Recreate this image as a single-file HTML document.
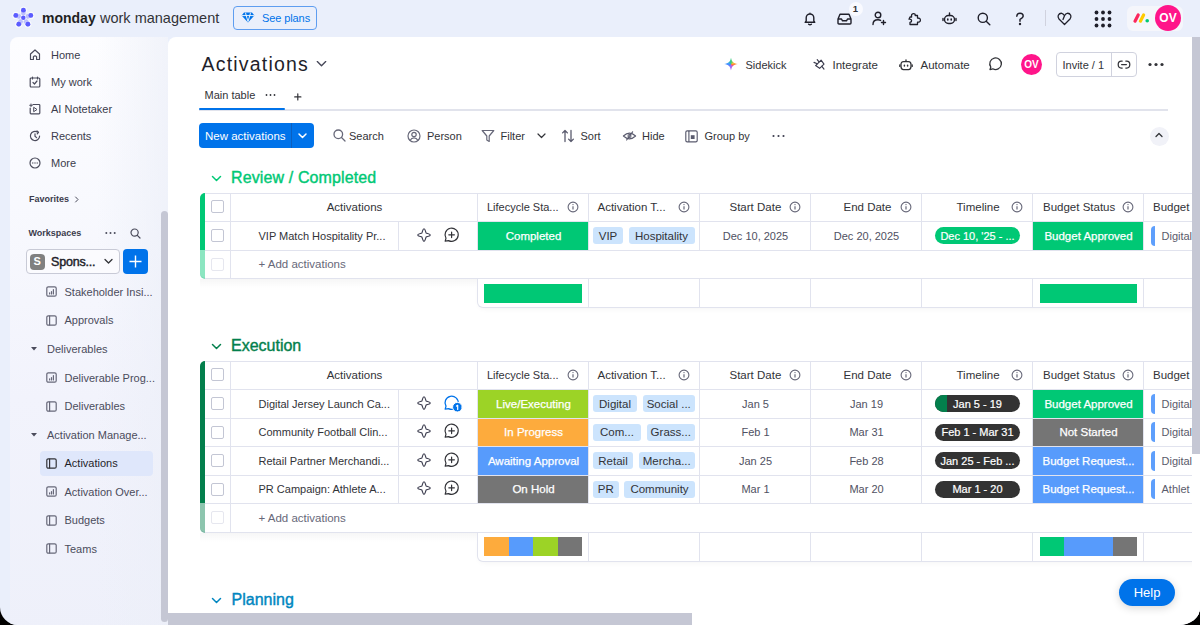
<!DOCTYPE html>
<html><head><meta charset="utf-8">
<style>
*{box-sizing:border-box;margin:0;padding:0}
html,body{width:1200px;height:625px;overflow:hidden;background:#000}
body{font-family:"Liberation Sans",sans-serif;color:#323338;position:relative}
#app{position:absolute;left:0;top:0;width:1200px;height:625px;background:#eaeffb;border-radius:0 0 21px 18px / 0 0 17px 18px;overflow:hidden}
.a{position:absolute}
.t{position:absolute;white-space:nowrap;line-height:16px}
svg{position:absolute;overflow:visible}
.ic{fill:none;stroke-width:1.4;stroke-linecap:round;stroke-linejoin:round}
#side{position:absolute;left:10px;top:37px;width:158px;height:600px;border-radius:8px 0 0 0;background:linear-gradient(90deg,rgba(236,239,248,0) 55%,rgba(236,239,248,.7) 100%),linear-gradient(180deg,#fdfdff 0%,#f8f9fe 28%,#f2f3fc 60%,#eef0fa 100%)}
.sb .t{font-size:11px;color:#323338}
.sic{fill:none;stroke-width:1.2;stroke-linecap:round;stroke-linejoin:round}
#main{position:absolute;left:168px;top:37px;width:1032px;height:600px;background:#fff;border-radius:8px 0 0 0}
</style></head><body>
<div id="app">
<!-- TOP BAR -->
<svg style="left:0;top:0" width="40" height="37"><g fill="#fff" opacity=".7"><circle cx="23.4" cy="10.2" r="3.6"/><circle cx="15.8" cy="15.4" r="3.6"/><circle cx="30.8" cy="15.4" r="3.6"/><circle cx="18.75" cy="24.2" r="3.6"/><circle cx="27.9" cy="24.2" r="3.6"/><circle cx="23.3" cy="17.7" r="3.3"/></g><line x1="23.40" y1="10.20" x2="23.36" y2="13.05" stroke="#6161ff" stroke-width="4.6" stroke-linecap="round" opacity=".35"/><line x1="15.80" y1="15.40" x2="18.65" y2="16.27" stroke="#6161ff" stroke-width="4.6" stroke-linecap="round" opacity=".35"/><line x1="30.80" y1="15.40" x2="27.95" y2="16.27" stroke="#6161ff" stroke-width="4.6" stroke-linecap="round" opacity=".35"/><line x1="18.75" y1="24.20" x2="20.48" y2="21.73" stroke="#6161ff" stroke-width="4.6" stroke-linecap="round" opacity=".35"/><line x1="27.90" y1="24.20" x2="26.15" y2="21.73" stroke="#6161ff" stroke-width="4.6" stroke-linecap="round" opacity=".35"/><g fill="#5b5bff"><circle cx="23.4" cy="10.2" r="2.4"/><circle cx="15.8" cy="15.4" r="2.4"/><circle cx="30.8" cy="15.4" r="2.4"/><circle cx="18.75" cy="24.2" r="2.4"/><circle cx="27.9" cy="24.2" r="2.4"/><circle cx="23.3" cy="17.7" r="2.2"/></g></svg>
<div class="t" style="left:42px;top:10px;font-size:14px;font-weight:bold;color:#1f1f1f;line-height:16px">monday</div>
<div class="t" style="left:100px;top:10px;font-size:14.5px;color:#323338;line-height:16px">work management</div>
<div class="a" style="left:233px;top:6px;width:84px;height:24px;border:1px solid #5e9df0;border-radius:4px"></div>
<svg style="left:241px;top:12px" width="14" height="11" viewBox="0 0 14 11">
  <path d="M3 0.6 H11 L13.4 3.6 L7 10.4 L0.6 3.6 Z" fill="#0073ea"/>
  <path d="M0.8 3.6 H13.2 M4.5 0.8 L5.2 3.6 L7 9.5 L8.8 3.6 L9.5 0.8" fill="none" stroke="#fff" stroke-width=".9"/>
</svg>
<div class="t" style="left:262px;top:10px;font-size:11px;letter-spacing:-0.1px;color:#0073ea">See plans</div>


<!-- TOPBAR ICONS -->
<svg style="left:803px;top:12px" width="14" height="14" viewBox="0 0 14 14" class="ic" stroke="#1f1f2a"><path d="M2.2 10.3 H11.8 L10.8 8.8 V5.8 A3.8 3.8 0 0 0 3.2 5.8 V8.8 Z M5.6 12.2 Q7 13.3 8.4 12.2 M7 1.2 V2"/></svg>
<svg style="left:837px;top:12px" width="15" height="14" viewBox="0 0 15 14" class="ic" stroke="#1f1f2a"><path d="M1 7 L3 2.3 H12 L14 7 V11 Q14 12 13 12 H2 Q1 12 1 11 Z M1 7 H4.5 L5.5 8.8 H9.5 L10.5 7 H14"/></svg>
<div class="a" style="left:848.5px;top:2px;width:14px;height:14px;border-radius:7px;background:#f9faff"></div>
<div class="t" style="left:848.5px;top:1px;width:14px;text-align:center;font-size:9.5px;font-weight:bold;color:#323338">1</div>
<svg style="left:872px;top:11px" width="15" height="15" viewBox="0 0 15 15" class="ic" stroke="#1f1f2a"><circle cx="6" cy="4" r="2.8"/><path d="M1 13.5 Q1 8.8 6 8.8 Q7.6 8.8 8.6 9.4 M11.5 9.5 V13.5 M9.5 11.5 H13.5"/></svg>
<svg style="left:907px;top:11px" width="15" height="15" viewBox="0 0 15 15" class="ic" stroke="#1f1f2a"><path d="M3 6 H4.6 Q4 3 6.3 2.6 Q8.4 2.5 8.2 4.5 H10.5 V7 Q13.5 7 13.4 9.2 Q13.3 11.4 10.5 11.2 V13.5 H3 V11.3 Q4.8 11 4.6 9.5 Q4.4 8 2 8.2 Z" stroke-width="1.3"/></svg>
<svg style="left:942px;top:12px" width="15" height="13" viewBox="0 0 15 13" class="ic" stroke="#1f1f2a"><rect x="2.5" y="3.5" width="10" height="8" rx="4"/><path d="M7.5 1 V3.5 M1 6.5 V8.5 M14 6.5 V8.5" /><path d="M5.8 7 V8 M9.2 7 V8" stroke-width="1.6"/></svg>
<svg style="left:977px;top:12px" width="14" height="14" viewBox="0 0 14 14" class="ic" stroke="#1f1f2a"><circle cx="5.8" cy="5.8" r="4.6"/><path d="M9.2 9.2 L12.8 12.8"/></svg>
<svg style="left:1014px;top:12px" width="12" height="14" viewBox="0 0 12 14" class="ic" stroke="#1f1f2a"><path d="M2.8 4.2 Q2.8 1.2 6 1.2 Q9.2 1.2 9.2 4 Q9.2 5.8 6 7.3 V9.2"/><circle cx="6" cy="12" r=".5" fill="#1f1f2a"/></svg>
<div class="a" style="left:1045px;top:10px;width:1px;height:16px;background:#d0d2de"></div>
<svg style="left:1057px;top:12px" width="15" height="14" viewBox="0 0 15 14" class="ic" stroke="#1f1f2a"><path d="M7.5 12.5 L2 7 Q0.5 5.2 1.3 3.2 Q2.5 1 4.8 1.3 Q6.5 1.6 7.5 3.8 L6 7.5 M7.5 12.5 L13 7 Q14.5 5.2 13.7 3.2 Q12.5 1 10.2 1.3 Q8.7 1.5 7.5 3.8" stroke-width="1.3"/></svg>
<svg style="left:1094px;top:10px" width="18" height="18" viewBox="0 0 18 18" fill="#1f1f2a"><circle cx="2.5" cy="2.5" r="1.9"/><circle cx="9" cy="2.5" r="1.9"/><circle cx="15.5" cy="2.5" r="1.9"/><circle cx="2.5" cy="9" r="1.9"/><circle cx="9" cy="9" r="1.9"/><circle cx="15.5" cy="9" r="1.9"/><circle cx="2.5" cy="15.5" r="1.9"/><circle cx="9" cy="15.5" r="1.9"/><circle cx="15.5" cy="15.5" r="1.9"/></svg>
<div class="a" style="left:1127px;top:6px;width:56px;height:25px;border-radius:6px;background:#f5f6fb"></div>
<svg style="left:1133px;top:13px" width="17" height="10" viewBox="0 0 17 10"><path d="M2 8.2 L5.2 2" stroke="#fb275d" stroke-width="3.2" stroke-linecap="round"/><path d="M7.4 8.2 L10.6 2" stroke="#ffcb00" stroke-width="3.2" stroke-linecap="round"/><circle cx="14.2" cy="7.8" r="1.8" fill="#00ca72"/></svg>
<div class="a" style="left:1155px;top:5px;width:26px;height:26px;border-radius:13px;background:#ff158a;color:#fff;font-weight:bold;font-size:12px;line-height:26px;text-align:center">OV</div>

<!-- SIDEBAR -->
<div id="side"></div>
<div class="sb">
<svg style="left:29px;top:49px" width="12" height="12" viewBox="0 0 12 12" class="sic" stroke="#4b4c5c"><path d="M1.5 10.5 V5 L6 1 L10.5 5 V10.5 H7.6 V7.6 Q6 6.3 4.4 7.6 V10.5 Z" stroke="#4b4c5c"/></svg>
<div class="t" style="left:51px;top:47px;color:#3b3c4c">Home</div>
<svg style="left:29px;top:76px" width="12" height="12" viewBox="0 0 12 12" class="sic"><rect x="1.2" y="2" width="9.6" height="9" rx="1" stroke="#4b4c5c"/><path d="M3.5 1 V3 M8.5 1 V3 M4 6.5 L5.5 8 L8 5" stroke="#4b4c5c"/></svg>
<div class="t" style="left:51px;top:74px;color:#3b3c4c">My work</div>
<svg style="left:29px;top:103px" width="12" height="12" viewBox="0 0 12 12" class="sic"><path d="M4 1.5 H10 Q10.8 1.5 10.8 2.3 V10 Q10.8 10.8 10 10.8 H2 Q1.2 10.8 1.2 10 V5" stroke="#4b4c5c"/><path d="M5 4.5 L8 6.5 L5 8.5 Z M2 1 V3.6 M0.7 2.3 H3.3" stroke="#4b4c5c" stroke-width="1"/></svg>
<div class="t" style="left:51px;top:101px;color:#3b3c4c">AI Notetaker</div>
<svg style="left:29px;top:130px" width="12" height="12" viewBox="0 0 12 12" class="sic"><path d="M10.6 6 A4.6 4.6 0 1 1 8.5 2.1" stroke="#4b4c5c"/><path d="M8 1 L9.5 2.3 L8.2 3.8 M6 3.8 V6.2 L7.6 7.6" stroke="#4b4c5c"/></svg>
<div class="t" style="left:51px;top:128px;color:#3b3c4c">Recents</div>
<svg style="left:29px;top:157px" width="12" height="12" viewBox="0 0 12 12" class="sic"><circle cx="6" cy="6" r="5" stroke="#4b4c5c"/><circle cx="3.8" cy="6" r=".65" fill="#4b4c5c" stroke="none"/><circle cx="6" cy="6" r=".65" fill="#4b4c5c" stroke="none"/><circle cx="8.2" cy="6" r=".65" fill="#4b4c5c" stroke="none"/></svg>
<div class="t" style="left:51px;top:155px;color:#3b3c4c">More</div>

<div class="t" style="left:29px;top:191px;font-size:9px;font-weight:bold;color:#3b3c4c">Favorites</div>
<svg style="left:73.5px;top:196px" width="6" height="7" viewBox="0 0 6 7" class="sic"><path d="M1.6 1 L4 3.5 L1.6 6" stroke="#4b4c5c" stroke-width="1"/></svg>
<div class="t" style="left:28.5px;top:225px;font-size:9px;font-weight:bold;color:#3b3c4c">Workspaces</div>
<svg style="left:105px;top:231px" width="11" height="4" viewBox="0 0 11 4"><circle cx="1.3" cy="2" r="1" fill="#4b4c5c"/><circle cx="5.5" cy="2" r="1" fill="#4b4c5c"/><circle cx="9.7" cy="2" r="1" fill="#4b4c5c"/></svg>
<svg style="left:130px;top:228px" width="11" height="11" viewBox="0 0 11 11" class="sic"><circle cx="4.6" cy="4.6" r="3.6" stroke="#4b4c5c"/><path d="M7.3 7.3 L10 10" stroke="#4b4c5c"/></svg>
<div class="a" style="left:25.5px;top:249px;width:94px;height:25px;border:1px solid #c8cad6;border-radius:4px;background:#fbfbfe"></div>
<div class="a" style="left:29.5px;top:254px;width:15.5px;height:15.5px;border-radius:4px;background:#808080;color:#fff;font-size:11px;font-weight:bold;line-height:15.5px;text-align:center">S</div>
<div class="t" style="left:51px;top:253.5px;font-size:12.5px;letter-spacing:-0.2px;-webkit-text-stroke:0.45px #1f1f2a;color:#1f1f2a">Spons...</div>
<svg style="left:104px;top:258px" width="9" height="7" viewBox="0 0 9 7" class="sic"><path d="M1 1.5 L4.5 5 L8 1.5" stroke="#323338" stroke-width="1.3"/></svg>
<div class="a" style="left:123px;top:249px;width:25px;height:25px;border-radius:4px;background:#0073ea"></div>
<svg style="left:129px;top:255px" width="13" height="13" viewBox="0 0 13 13"><path d="M6.5 0.5 V12.5 M0.5 6.5 H12.5" stroke="#fff" stroke-width="1.4"/></svg>

<svg style="left:46px;top:286px" width="11" height="11" viewBox="0 0 11 11" class="sic"><rect x="0.8" y="0.8" width="9.4" height="9.4" rx="1.5" stroke="#676879"/><path d="M3.6 8 V6.8 M5.5 8 V5.5 M7.4 8 V3.5" stroke="#676879"/></svg>
<div class="t" style="left:64.5px;top:284px;color:#4b4c5c">Stakeholder Insi...</div>
<svg style="left:46px;top:315px" width="11" height="11" viewBox="0 0 11 11" class="sic"><rect x="0.8" y="0.8" width="9.4" height="9.4" rx="1.5" stroke="#676879"/><path d="M3.6 1 V10" stroke="#676879"/></svg>
<div class="t" style="left:64.5px;top:312px;color:#4b4c5c">Approvals</div>
<svg style="left:30px;top:346px" width="8" height="6" viewBox="0 0 8 6"><path d="M1 1 H7 L4 4.6 Z" fill="#4b4c5c"/></svg>
<div class="t" style="left:47px;top:341px;color:#4b4c5c">Deliverables</div>
<svg style="left:46px;top:372px" width="11" height="11" viewBox="0 0 11 11" class="sic"><rect x="0.8" y="0.8" width="9.4" height="9.4" rx="1.5" stroke="#676879"/><path d="M3.6 8 V6.8 M5.5 8 V5.5 M7.4 8 V3.5" stroke="#676879"/></svg>
<div class="t" style="left:64.5px;top:370px;color:#4b4c5c">Deliverable Prog...</div>
<svg style="left:46px;top:401px" width="11" height="11" viewBox="0 0 11 11" class="sic"><rect x="0.8" y="0.8" width="9.4" height="9.4" rx="1.5" stroke="#676879"/><path d="M3.6 1 V10" stroke="#676879"/></svg>
<div class="t" style="left:64.5px;top:398px;color:#4b4c5c">Deliverables</div>
<svg style="left:30px;top:432px" width="8" height="6" viewBox="0 0 8 6"><path d="M1 1 H7 L4 4.6 Z" fill="#4b4c5c"/></svg>
<div class="t" style="left:47px;top:427px;color:#4b4c5c">Activation Manage...</div>
<div class="a" style="left:40px;top:450.5px;width:113px;height:25px;border-radius:4px;background:#dfe7fb"></div>
<svg style="left:46px;top:458px" width="11" height="11" viewBox="0 0 11 11" class="sic"><rect x="0.8" y="0.8" width="9.4" height="9.4" rx="1.5" stroke="#323338"/><path d="M3.6 1 V10" stroke="#323338"/></svg>
<div class="t" style="left:64.5px;top:455px;color:#1f1f2a">Activations</div>
<svg style="left:46px;top:486px" width="11" height="11" viewBox="0 0 11 11" class="sic"><rect x="0.8" y="0.8" width="9.4" height="9.4" rx="1.5" stroke="#676879"/><path d="M3.6 8 V6.8 M5.5 8 V5.5 M7.4 8 V3.5" stroke="#676879"/></svg>
<div class="t" style="left:64.5px;top:484px;color:#4b4c5c">Activation Over...</div>
<svg style="left:46px;top:515px" width="11" height="11" viewBox="0 0 11 11" class="sic"><rect x="0.8" y="0.8" width="9.4" height="9.4" rx="1.5" stroke="#676879"/><path d="M3.6 1 V10" stroke="#676879"/></svg>
<div class="t" style="left:64.5px;top:512px;color:#4b4c5c">Budgets</div>
<svg style="left:46px;top:543px" width="11" height="11" viewBox="0 0 11 11" class="sic"><rect x="0.8" y="0.8" width="9.4" height="9.4" rx="1.5" stroke="#676879"/><path d="M3.6 1 V10" stroke="#676879"/></svg>
<div class="t" style="left:64.5px;top:541px;color:#4b4c5c">Teams</div>
<div class="a" style="left:161px;top:210.5px;width:7px;height:411px;border-radius:3.5px;background:#c5c7d4"></div>
</div>

<!-- MAIN -->
<div id="main"></div>

<!-- MAIN HEADER -->
<div class="t" style="left:201.5px;top:52.8px;font-size:19.5px;line-height:22px;letter-spacing:1.2px;color:#1f1f2a">Activations</div>
<svg style="left:315.5px;top:59.8px" width="11" height="8" viewBox="0 0 11 8" class="ic" stroke="#454657"><path d="M1.3 1.6 L5.5 5.8 L9.7 1.6" stroke-width="1.35"/></svg>
<div class="a" style="left:723px;top:57px;width:16px;height:15px;background:conic-gradient(#2fcf7c 0deg,#f5c33b 60deg,#ff6a3d 100deg,#c45ad8 150deg,#9d6bff 190deg,#4f7dff 250deg,#3f9bff 290deg,#2fcf7c 360deg);clip-path:path('M8 0.5 C8.6 4.6 10.4 6.4 14.8 7 C10.4 7.6 8.6 9.4 8 13.6 C7.4 9.4 5.6 7.6 1.2 7 C5.6 6.4 7.4 4.6 8 0.5 Z')"></div>
<div class="t" style="left:745.5px;top:56.5px;font-size:11px;color:#323338">Sidekick</div>
<svg style="left:810px;top:55px" width="20" height="18" viewBox="0 0 20 18" class="ic" stroke="#3b3c4e"><path d="M11.1 5.2 L14 9.1 L9.6 13.3 L5.6 10.6 Z" stroke-width="1.15"/><path d="M9 6.9 L7.2 4.6 M7.2 8.8 L4 7.4 M11.9 11.3 L14 14.1" stroke-width="1.15"/></svg>
<div class="t" style="left:832.5px;top:56.5px;font-size:11.5px;color:#323338">Integrate</div>
<svg style="left:899px;top:59px" width="14" height="12" viewBox="0 0 14 12" class="ic" stroke="#323338"><path d="M4.5 2.6 H9.5 Q12 2.6 12 5.6 V7.6 Q12 10.6 9.5 10.6 H4.5 Q2 10.6 2 7.6 V5.6 Q2 2.6 4.5 2.6 Z" stroke-width="1.3"/><path d="M7 0.8 V2.4 M0.8 5.8 L0.8 7.4 M13.2 5.8 V7.4" stroke-width="1.3"/><path d="M5.4 6.2 V7 M8.6 6.2 V7" stroke-width="1.5"/></svg>
<div class="t" style="left:920.5px;top:56.5px;font-size:11.5px;color:#323338">Automate</div>
<svg style="left:988px;top:57px" width="15" height="14" viewBox="0 0 15 14" class="ic" stroke="#323338"><path d="M2 12.6 L2.8 10 A5.8 5.8 0 1 1 4.8 11.8 Z" stroke-width="1.3"/></svg>
<div class="a" style="left:1021px;top:54px;width:21px;height:21px;border-radius:11px;background:#ff158a;color:#fff;font-weight:bold;font-size:10px;line-height:21px;text-align:center">OV</div>
<div class="a" style="left:1055.5px;top:51.5px;width:81px;height:25px;border:1px solid #d0d2de;border-radius:4px"></div>
<div class="a" style="left:1111px;top:52px;width:1px;height:24px;background:#d0d2de"></div>
<div class="t" style="left:1062.5px;top:56.5px;font-size:11px;color:#323338">Invite / 1</div>
<svg style="left:1117px;top:59px" width="14" height="11" viewBox="0 0 14 11" class="ic" stroke="#323338"><path d="M5.2 2 H4.3 Q1.2 2 1.2 5.5 Q1.2 9 4.3 9 H5.2 M8.8 2 H9.7 Q12.8 2 12.8 5.5 Q12.8 9 9.7 9 H8.8 M4.6 5.5 H9.4" stroke-width="1.25"/></svg>
<svg style="left:1148px;top:62px" width="16" height="5" viewBox="0 0 16 5" fill="#323338"><circle cx="2" cy="2.5" r="1.6"/><circle cx="8" cy="2.5" r="1.6"/><circle cx="14" cy="2.5" r="1.6"/></svg>

<!-- TABS -->
<div class="t" style="left:204.5px;top:87px;font-size:11px;color:#323338">Main table</div>
<svg style="left:265px;top:93px" width="11" height="4" viewBox="0 0 11 4" fill="#323338"><circle cx="1.5" cy="2" r=".9"/><circle cx="5.5" cy="2" r=".9"/><circle cx="9.5" cy="2" r=".9"/></svg>
<svg style="left:293.5px;top:92.8px" width="8" height="8" viewBox="0 0 8 8" class="ic" stroke="#323338"><path d="M3.8 0.8 V7 M0.7 3.9 H6.9" stroke-width="1.2"/></svg>
<div class="a" style="left:199px;top:109px;width:969px;height:1.5px;background:#e1e3ec"></div>
<div class="a" style="left:198.5px;top:108px;width:86.5px;height:2px;border-radius:1px;background:#0073ea"></div>

<!-- TOOLBAR -->
<div class="a" style="left:198.5px;top:123px;width:115px;height:25px;border-radius:4px;background:#0073ea"></div>
<div class="a" style="left:291px;top:123px;width:1px;height:25px;background:#0a5fc0"></div>
<div class="t" style="left:205px;top:128px;font-size:11.5px;color:#fff">New activations</div>
<svg style="left:298px;top:133px" width="9" height="6" viewBox="0 0 9 6" class="ic" stroke="#fff"><path d="M1 1 L4.5 4.5 L8 1" stroke-width="1.5"/></svg>
<svg style="left:333px;top:129px" width="13" height="13" viewBox="0 0 13 13" class="ic" stroke="#676879"><circle cx="5.3" cy="5.3" r="4.3" stroke-width="1.3"/><path d="M8.5 8.5 L12 12" stroke-width="1.3"/></svg>
<div class="t" style="left:349px;top:128px;font-size:11px;color:#323338">Search</div>
<svg style="left:407px;top:129px" width="14" height="14" viewBox="0 0 14 14" class="ic" stroke="#676879"><circle cx="7" cy="7" r="6" stroke-width="1.2"/><circle cx="7" cy="5.5" r="2.2" stroke-width="1.2"/><path d="M3.2 11.3 Q4.5 8.8 7 8.8 Q9.5 8.8 10.8 11.3" stroke-width="1.2"/></svg>
<div class="t" style="left:427px;top:128px;font-size:11px;color:#323338">Person</div>
<svg style="left:480.5px;top:129px" width="14" height="14" viewBox="0 0 14 14" class="ic" stroke="#676879"><path d="M1.2 1.5 H12.8 L8.2 7 V12.5 L5.8 11 V7 Z" stroke-width="1.2"/></svg>
<div class="t" style="left:500.5px;top:128px;font-size:11px;color:#323338">Filter</div>
<svg style="left:536.5px;top:133px" width="9" height="6" viewBox="0 0 9 6" class="ic" stroke="#323338"><path d="M1 1 L4.5 4.5 L8 1" stroke-width="1.2"/></svg>
<svg style="left:560px;top:129px" width="16" height="14" viewBox="0 0 16 14" class="ic" stroke="#5a5b6e"><path d="M5 12.5 V1.5 M2.6 3.9 L5 1.5 L7.4 3.9 M11 1.5 V12.5 M8.6 10.1 L11 12.5 L13.4 10.1" stroke-width="1.3"/></svg>
<div class="t" style="left:580.5px;top:128px;font-size:11px;color:#323338">Sort</div>
<svg style="left:621.5px;top:129.5px" width="15" height="12" viewBox="0 0 15 12" class="ic" stroke="#5a5b6e"><path d="M1.4 6 Q7.5 0.4 13.6 6 Q7.5 11.6 1.4 6 Z" stroke-width="1.15"/><circle cx="7.5" cy="6" r="1.5" stroke-width="1.05"/><path d="M4.6 10 L10.6 1.8" stroke-width="1.15"/></svg>
<div class="t" style="left:642px;top:128px;font-size:11px;color:#323338">Hide</div>
<svg style="left:685px;top:129.5px" width="13" height="13" viewBox="0 0 13 13" class="ic" stroke="#5a5b6e"><rect x="0.8" y="0.8" width="11.4" height="11" rx="1.4" stroke-width="1.15"/><path d="M3.9 1.2 V11.5" stroke-width="1.15"/><rect x="5.8" y="5.2" width="3.8" height="3.8" fill="#5a5b6e" stroke="none"/></svg>
<div class="t" style="left:704.5px;top:128px;font-size:11px;color:#323338">Group by</div>
<svg style="left:772px;top:134px" width="13" height="4" viewBox="0 0 13 4" fill="#3b3c4e"><circle cx="1.5" cy="2" r="1.05"/><circle cx="6.5" cy="2" r="1.05"/><circle cx="11.5" cy="2" r="1.05"/></svg>
<div class="a" style="left:1149.5px;top:126.5px;width:19px;height:19px;border-radius:10px;background:#f1f2f8"></div>
<svg style="left:1155px;top:132px" width="8" height="6" viewBox="0 0 8 6" class="ic" stroke="#323338"><path d="M1 4.5 L4 1.5 L7 4.5" stroke-width="1.3"/></svg>

<!-- BOARD -->
<svg style="left:211px;top:175.0px" width="11" height="7" viewBox="0 0 11 7" class="ic" stroke="#00c875"><path d="M1.5 1.5 L5.5 5.5 L9.5 1.5" stroke-width="1.5"/></svg>
<div class="t" style="left:231px;top:168.5px;font-size:16px;line-height:18px;-webkit-text-stroke:0.4px #00c875;color:#00c875;letter-spacing:0.12px">Review / Completed</div>
<div class="a" style="left:200px;top:193px;width:1000px;height:86.0px;border-top:1px solid #e1e3ee;border-bottom:1px solid #e1e3ee;border-radius:6px 0 0 6px;background:#fff"></div>
<div class="a" style="left:200px;top:193px;width:5px;height:56.5px;background:#00c875;border-radius:6px 0 0 0"></div>
<div class="a" style="left:200px;top:249.5px;width:5px;height:29.5px;background:#00c875;opacity:.45;border-radius:0 0 0 6px"></div>
<div class="a" style="left:205px;top:221px;width:1000px;height:1px;background:#e1e3ee"></div>
<div class="a" style="left:205px;top:249.5px;width:1000px;height:1px;background:#e1e3ee"></div>
<div class="a" style="left:230px;top:193px;width:1px;height:85.0px;background:#e1e3ee"></div>
<div class="a" style="left:477px;top:193px;width:1px;height:56.5px;background:#e1e3ee"></div>
<div class="a" style="left:588px;top:193px;width:1px;height:56.5px;background:#e1e3ee"></div>
<div class="a" style="left:699px;top:193px;width:1px;height:56.5px;background:#e1e3ee"></div>
<div class="a" style="left:810px;top:193px;width:1px;height:56.5px;background:#e1e3ee"></div>
<div class="a" style="left:921px;top:193px;width:1px;height:56.5px;background:#e1e3ee"></div>
<div class="a" style="left:1032px;top:193px;width:1px;height:56.5px;background:#e1e3ee"></div>
<div class="a" style="left:1143px;top:193px;width:1px;height:56.5px;background:#e1e3ee"></div>
<div class="a" style="left:398px;top:221px;width:1px;height:28.5px;background:#e1e3ee"></div>
<div class="a" style="left:211px;top:200.3px;width:13px;height:13px;border:1px solid #c3c6d4;border-radius:2px"></div>
<div class="t" style="left:231px;top:198.8px;width:247px;text-align:center;font-size:11.5px;color:#323338;">Activations</div>
<div class="t" style="left:487px;top:198.8px;font-size:11px;color:#323338;">Lifecycle Sta...</div>
<div class="t" style="left:597.5px;top:198.8px;font-size:11.5px;color:#323338;">Activation T...</div>
<div class="t" style="left:729.5px;top:198.8px;font-size:11.5px;color:#323338;">Start Date</div>
<div class="t" style="left:843.5px;top:198.8px;font-size:11.5px;color:#323338;">End Date</div>
<div class="t" style="left:956.5px;top:198.8px;font-size:11.5px;color:#323338;">Timeline</div>
<div class="t" style="left:1043px;top:198.8px;font-size:11.5px;color:#323338;">Budget Status</div>
<div class="t" style="left:1153px;top:198.8px;font-size:11.5px;color:#323338;">Budget</div>
<svg style="left:567px;top:200.8px" width="12" height="12" viewBox="0 0 12 12"><circle cx="6" cy="6" r="4.9" fill="none" stroke="#676879" stroke-width="1.1"/><path d="M6 5.3 V8.4" stroke="#676879" stroke-width="1.2"/><circle cx="6" cy="3.6" r=".7" fill="#676879"/></svg>
<svg style="left:678px;top:200.8px" width="12" height="12" viewBox="0 0 12 12"><circle cx="6" cy="6" r="4.9" fill="none" stroke="#676879" stroke-width="1.1"/><path d="M6 5.3 V8.4" stroke="#676879" stroke-width="1.2"/><circle cx="6" cy="3.6" r=".7" fill="#676879"/></svg>
<svg style="left:789px;top:200.8px" width="12" height="12" viewBox="0 0 12 12"><circle cx="6" cy="6" r="4.9" fill="none" stroke="#676879" stroke-width="1.1"/><path d="M6 5.3 V8.4" stroke="#676879" stroke-width="1.2"/><circle cx="6" cy="3.6" r=".7" fill="#676879"/></svg>
<svg style="left:900px;top:200.8px" width="12" height="12" viewBox="0 0 12 12"><circle cx="6" cy="6" r="4.9" fill="none" stroke="#676879" stroke-width="1.1"/><path d="M6 5.3 V8.4" stroke="#676879" stroke-width="1.2"/><circle cx="6" cy="3.6" r=".7" fill="#676879"/></svg>
<svg style="left:1011px;top:200.8px" width="12" height="12" viewBox="0 0 12 12"><circle cx="6" cy="6" r="4.9" fill="none" stroke="#676879" stroke-width="1.1"/><path d="M6 5.3 V8.4" stroke="#676879" stroke-width="1.2"/><circle cx="6" cy="3.6" r=".7" fill="#676879"/></svg>
<svg style="left:1122px;top:200.8px" width="12" height="12" viewBox="0 0 12 12"><circle cx="6" cy="6" r="4.9" fill="none" stroke="#676879" stroke-width="1.1"/><path d="M6 5.3 V8.4" stroke="#676879" stroke-width="1.2"/><circle cx="6" cy="3.6" r=".7" fill="#676879"/></svg>
<div class="a" style="left:211px;top:229.0px;width:13px;height:13px;border:1px solid #c3c6d4;border-radius:2px"></div>
<div class="t" style="left:258.5px;top:227.5px;font-size:11px;color:#323338;">VIP Match Hospitality Pr...</div>
<svg style="left:416px;top:226.7px" width="16" height="16" viewBox="0 0 16 16" class="ic" stroke="#3b3c4e"><path d="M8.00 1.70 C9.30 1.70 9.50 5.00 10.10 5.90 C11.00 6.50 14.30 6.70 14.30 8.00 C14.30 9.30 11.00 9.50 10.10 10.10 C9.50 11.00 9.30 14.30 8.00 14.30 C6.70 14.30 6.50 11.00 5.90 10.10 C5.00 9.50 1.70 9.30 1.70 8.00 C1.70 6.70 5.00 6.50 5.90 5.90 C6.50 5.00 6.70 1.70 8.00 1.70 Z" stroke-width="1.15"/></svg>
<svg style="left:443px;top:226.7px" width="16" height="16" viewBox="0 0 16 16" class="ic" stroke="#323338"><path d="M2.2 14.2 L3 11.2 A6.6 6.6 0 1 1 5.6 13.6 Z" stroke-width="1.2"/><path d="M8.6 5 V10.6 M5.8 7.8 H11.4" stroke-width="1.2"/></svg>
<div class="a" style="left:478px;top:222px;width:110px;height:27.5px;background:#00c875"></div>
<div class="t" style="left:478px;top:227.5px;width:111px;text-align:center;font-size:11.5px;color:#fff;-webkit-text-stroke:0.25px #fff">Completed</div>
<div class="a" style="left:593px;top:227.0px;width:30px;height:17px;border-radius:3px;background:#cce4fd"></div>
<div class="t" style="left:593px;top:227.5px;width:30px;text-align:center;font-size:11.5px;color:#323338;">VIP</div>
<div class="a" style="left:628.5px;top:227.0px;width:66.0px;height:17px;border-radius:3px;background:#cce4fd"></div>
<div class="t" style="left:628.5px;top:227.5px;width:66.0px;text-align:center;font-size:11.5px;color:#323338;">Hospitality</div>
<div class="t" style="left:700px;top:227.5px;width:111px;text-align:center;font-size:11px;color:#505162;">Dec 10, 2025</div>
<div class="t" style="left:811px;top:227.5px;width:111px;text-align:center;font-size:11px;color:#505162;">Dec 20, 2025</div>
<div class="a" style="left:935px;top:227.0px;width:85px;height:17px;border-radius:9px;background:#00c875;overflow:hidden"></div>
<div class="t" style="left:935px;top:227.5px;width:85px;text-align:center;font-size:11px;color:#fff;-webkit-text-stroke:0.2px #fff">Dec 10, '25 - ...</div>
<div class="a" style="left:1033px;top:222px;width:110px;height:27.5px;background:#00c875"></div>
<div class="t" style="left:1033px;top:227.5px;width:111px;text-align:center;font-size:11.5px;color:#fff;-webkit-text-stroke:0.25px #fff">Budget Approved</div>
<div class="a" style="left:1151px;top:225.5px;width:4px;height:20px;border-radius:4px 0 0 4px;background:#5e9ffc"></div>
<div class="t" style="left:1161.5px;top:227.5px;font-size:11px;color:#5a5b6b;">Digital</div>
<div class="a" style="left:211px;top:257.5px;width:13px;height:13px;border:1px solid #e6e7ef;border-radius:2px"></div>
<div class="t" style="left:258.5px;top:256.0px;font-size:11.5px;color:#676879;">+ Add activations</div>
<div class="a" style="left:200px;top:279.0px;width:278px;height:9px;background:linear-gradient(180deg,rgba(0,0,0,.035),rgba(0,0,0,0))"></div>
<div class="a" style="left:477px;top:279.0px;width:800px;height:29px;border:1px solid #e1e3ee;border-top:none;border-radius:0 0 0 6px;background:#fff;box-shadow:0 3px 6px -3px rgba(0,0,0,.06)"></div>
<div class="a" style="left:588px;top:279.0px;width:1px;height:28px;background:#e1e3ee"></div>
<div class="a" style="left:699px;top:279.0px;width:1px;height:28px;background:#e1e3ee"></div>
<div class="a" style="left:810px;top:279.0px;width:1px;height:28px;background:#e1e3ee"></div>
<div class="a" style="left:921px;top:279.0px;width:1px;height:28px;background:#e1e3ee"></div>
<div class="a" style="left:1032px;top:279.0px;width:1px;height:28px;background:#e1e3ee"></div>
<div class="a" style="left:1143px;top:279.0px;width:1px;height:28px;background:#e1e3ee"></div>
<div class="a" style="left:484px;top:283.5px;width:98px;height:19px;background:#00c875"></div>
<div class="a" style="left:1040px;top:283.5px;width:97px;height:19px;background:#00c875"></div>
<svg style="left:211px;top:343.0px" width="11" height="7" viewBox="0 0 11 7" class="ic" stroke="#037f4c"><path d="M1.5 1.5 L5.5 5.5 L9.5 1.5" stroke-width="1.5"/></svg>
<div class="t" style="left:231px;top:336.5px;font-size:16px;line-height:18px;-webkit-text-stroke:0.4px #037f4c;color:#037f4c;letter-spacing:0px">Execution</div>
<div class="a" style="left:200px;top:361px;width:1000px;height:171.5px;border-top:1px solid #e1e3ee;border-bottom:1px solid #e1e3ee;border-radius:6px 0 0 6px;background:#fff"></div>
<div class="a" style="left:200px;top:361px;width:5px;height:142.0px;background:#037f4c;border-radius:6px 0 0 0"></div>
<div class="a" style="left:200px;top:503.0px;width:5px;height:29.5px;background:#037f4c;opacity:.45;border-radius:0 0 0 6px"></div>
<div class="a" style="left:205px;top:389px;width:1000px;height:1px;background:#e1e3ee"></div>
<div class="a" style="left:205px;top:417.5px;width:1000px;height:1px;background:#e1e3ee"></div>
<div class="a" style="left:205px;top:446.0px;width:1000px;height:1px;background:#e1e3ee"></div>
<div class="a" style="left:205px;top:474.5px;width:1000px;height:1px;background:#e1e3ee"></div>
<div class="a" style="left:205px;top:503.0px;width:1000px;height:1px;background:#e1e3ee"></div>
<div class="a" style="left:230px;top:361px;width:1px;height:170.5px;background:#e1e3ee"></div>
<div class="a" style="left:477px;top:361px;width:1px;height:142.0px;background:#e1e3ee"></div>
<div class="a" style="left:588px;top:361px;width:1px;height:142.0px;background:#e1e3ee"></div>
<div class="a" style="left:699px;top:361px;width:1px;height:142.0px;background:#e1e3ee"></div>
<div class="a" style="left:810px;top:361px;width:1px;height:142.0px;background:#e1e3ee"></div>
<div class="a" style="left:921px;top:361px;width:1px;height:142.0px;background:#e1e3ee"></div>
<div class="a" style="left:1032px;top:361px;width:1px;height:142.0px;background:#e1e3ee"></div>
<div class="a" style="left:1143px;top:361px;width:1px;height:142.0px;background:#e1e3ee"></div>
<div class="a" style="left:398px;top:389px;width:1px;height:28.5px;background:#e1e3ee"></div>
<div class="a" style="left:398px;top:417.5px;width:1px;height:28.5px;background:#e1e3ee"></div>
<div class="a" style="left:398px;top:446.0px;width:1px;height:28.5px;background:#e1e3ee"></div>
<div class="a" style="left:398px;top:474.5px;width:1px;height:28.5px;background:#e1e3ee"></div>
<div class="a" style="left:211px;top:368.3px;width:13px;height:13px;border:1px solid #c3c6d4;border-radius:2px"></div>
<div class="t" style="left:231px;top:366.8px;width:247px;text-align:center;font-size:11.5px;color:#323338;">Activations</div>
<div class="t" style="left:487px;top:366.8px;font-size:11px;color:#323338;">Lifecycle Sta...</div>
<div class="t" style="left:597.5px;top:366.8px;font-size:11.5px;color:#323338;">Activation T...</div>
<div class="t" style="left:729.5px;top:366.8px;font-size:11.5px;color:#323338;">Start Date</div>
<div class="t" style="left:843.5px;top:366.8px;font-size:11.5px;color:#323338;">End Date</div>
<div class="t" style="left:956.5px;top:366.8px;font-size:11.5px;color:#323338;">Timeline</div>
<div class="t" style="left:1043px;top:366.8px;font-size:11.5px;color:#323338;">Budget Status</div>
<div class="t" style="left:1153px;top:366.8px;font-size:11.5px;color:#323338;">Budget</div>
<svg style="left:567px;top:368.8px" width="12" height="12" viewBox="0 0 12 12"><circle cx="6" cy="6" r="4.9" fill="none" stroke="#676879" stroke-width="1.1"/><path d="M6 5.3 V8.4" stroke="#676879" stroke-width="1.2"/><circle cx="6" cy="3.6" r=".7" fill="#676879"/></svg>
<svg style="left:678px;top:368.8px" width="12" height="12" viewBox="0 0 12 12"><circle cx="6" cy="6" r="4.9" fill="none" stroke="#676879" stroke-width="1.1"/><path d="M6 5.3 V8.4" stroke="#676879" stroke-width="1.2"/><circle cx="6" cy="3.6" r=".7" fill="#676879"/></svg>
<svg style="left:789px;top:368.8px" width="12" height="12" viewBox="0 0 12 12"><circle cx="6" cy="6" r="4.9" fill="none" stroke="#676879" stroke-width="1.1"/><path d="M6 5.3 V8.4" stroke="#676879" stroke-width="1.2"/><circle cx="6" cy="3.6" r=".7" fill="#676879"/></svg>
<svg style="left:900px;top:368.8px" width="12" height="12" viewBox="0 0 12 12"><circle cx="6" cy="6" r="4.9" fill="none" stroke="#676879" stroke-width="1.1"/><path d="M6 5.3 V8.4" stroke="#676879" stroke-width="1.2"/><circle cx="6" cy="3.6" r=".7" fill="#676879"/></svg>
<svg style="left:1011px;top:368.8px" width="12" height="12" viewBox="0 0 12 12"><circle cx="6" cy="6" r="4.9" fill="none" stroke="#676879" stroke-width="1.1"/><path d="M6 5.3 V8.4" stroke="#676879" stroke-width="1.2"/><circle cx="6" cy="3.6" r=".7" fill="#676879"/></svg>
<svg style="left:1122px;top:368.8px" width="12" height="12" viewBox="0 0 12 12"><circle cx="6" cy="6" r="4.9" fill="none" stroke="#676879" stroke-width="1.1"/><path d="M6 5.3 V8.4" stroke="#676879" stroke-width="1.2"/><circle cx="6" cy="3.6" r=".7" fill="#676879"/></svg>
<div class="a" style="left:211px;top:397.0px;width:13px;height:13px;border:1px solid #c3c6d4;border-radius:2px"></div>
<div class="t" style="left:258.5px;top:395.5px;font-size:11px;color:#323338;">Digital Jersey Launch Ca...</div>
<svg style="left:416px;top:394.7px" width="16" height="16" viewBox="0 0 16 16" class="ic" stroke="#3b3c4e"><path d="M8.00 1.70 C9.30 1.70 9.50 5.00 10.10 5.90 C11.00 6.50 14.30 6.70 14.30 8.00 C14.30 9.30 11.00 9.50 10.10 10.10 C9.50 11.00 9.30 14.30 8.00 14.30 C6.70 14.30 6.50 11.00 5.90 10.10 C5.00 9.50 1.70 9.30 1.70 8.00 C1.70 6.70 5.00 6.50 5.90 5.90 C6.50 5.00 6.70 1.70 8.00 1.70 Z" stroke-width="1.15"/></svg>
<svg style="left:443px;top:394.7px" width="16" height="16" viewBox="0 0 16 16" class="ic" stroke="#0073ea"><path d="M2.2 14.2 L3 11.2 A6.6 6.6 0 1 1 5.6 13.6 Z" stroke-width="1.3"/><circle cx="14.4" cy="12.2" r="4.8" fill="#0073ea" stroke="#fff" stroke-width="1"/><path d="M13.5 11.1 L14.7 10.3 V14.4" stroke="#fff" stroke-width="1.2"/></svg>
<div class="a" style="left:478px;top:390px;width:110px;height:27.5px;background:#9cd326"></div>
<div class="t" style="left:478px;top:395.5px;width:111px;text-align:center;font-size:11.5px;color:#fff;-webkit-text-stroke:0.25px #fff">Live/Executing</div>
<div class="a" style="left:593px;top:395.0px;width:44px;height:17px;border-radius:3px;background:#cce4fd"></div>
<div class="t" style="left:593px;top:395.5px;width:44px;text-align:center;font-size:11.5px;color:#323338;">Digital</div>
<div class="a" style="left:642.5px;top:395.0px;width:52.5px;height:17px;border-radius:3px;background:#cce4fd"></div>
<div class="t" style="left:642.5px;top:395.5px;width:52.5px;text-align:center;font-size:11.5px;color:#323338;">Social ...</div>
<div class="t" style="left:700px;top:395.5px;width:111px;text-align:center;font-size:11px;color:#505162;">Jan 5</div>
<div class="t" style="left:811px;top:395.5px;width:111px;text-align:center;font-size:11px;color:#505162;">Jan 19</div>
<div class="a" style="left:935px;top:395.0px;width:85px;height:17px;border-radius:9px;background:#333333;overflow:hidden"><div style="width:12px;height:17px;background:#037f4c"></div></div>
<div class="t" style="left:935px;top:395.5px;width:85px;text-align:center;font-size:11px;color:#fff;-webkit-text-stroke:0.2px #fff">Jan 5 - 19</div>
<div class="a" style="left:1033px;top:390px;width:110px;height:27.5px;background:#00c875"></div>
<div class="t" style="left:1033px;top:395.5px;width:111px;text-align:center;font-size:11.5px;color:#fff;-webkit-text-stroke:0.25px #fff">Budget Approved</div>
<div class="a" style="left:1151px;top:393.5px;width:4px;height:20px;border-radius:4px 0 0 4px;background:#5e9ffc"></div>
<div class="t" style="left:1161.5px;top:395.5px;font-size:11px;color:#5a5b6b;">Digital</div>
<div class="a" style="left:211px;top:425.5px;width:13px;height:13px;border:1px solid #c3c6d4;border-radius:2px"></div>
<div class="t" style="left:258.5px;top:424.0px;font-size:11px;color:#323338;">Community Football Clin...</div>
<svg style="left:416px;top:423.2px" width="16" height="16" viewBox="0 0 16 16" class="ic" stroke="#3b3c4e"><path d="M8.00 1.70 C9.30 1.70 9.50 5.00 10.10 5.90 C11.00 6.50 14.30 6.70 14.30 8.00 C14.30 9.30 11.00 9.50 10.10 10.10 C9.50 11.00 9.30 14.30 8.00 14.30 C6.70 14.30 6.50 11.00 5.90 10.10 C5.00 9.50 1.70 9.30 1.70 8.00 C1.70 6.70 5.00 6.50 5.90 5.90 C6.50 5.00 6.70 1.70 8.00 1.70 Z" stroke-width="1.15"/></svg>
<svg style="left:443px;top:423.2px" width="16" height="16" viewBox="0 0 16 16" class="ic" stroke="#323338"><path d="M2.2 14.2 L3 11.2 A6.6 6.6 0 1 1 5.6 13.6 Z" stroke-width="1.2"/><path d="M8.6 5 V10.6 M5.8 7.8 H11.4" stroke-width="1.2"/></svg>
<div class="a" style="left:478px;top:418.5px;width:110px;height:27.5px;background:#fdab3d"></div>
<div class="t" style="left:478px;top:424.0px;width:111px;text-align:center;font-size:11.5px;color:#fff;-webkit-text-stroke:0.25px #fff">In Progress</div>
<div class="a" style="left:593px;top:423.5px;width:48px;height:17px;border-radius:3px;background:#cce4fd"></div>
<div class="t" style="left:593px;top:424.0px;width:48px;text-align:center;font-size:11.5px;color:#323338;">Com...</div>
<div class="a" style="left:646.5px;top:423.5px;width:48.5px;height:17px;border-radius:3px;background:#cce4fd"></div>
<div class="t" style="left:646.5px;top:424.0px;width:48.5px;text-align:center;font-size:11.5px;color:#323338;">Grass...</div>
<div class="t" style="left:700px;top:424.0px;width:111px;text-align:center;font-size:11px;color:#505162;">Feb 1</div>
<div class="t" style="left:811px;top:424.0px;width:111px;text-align:center;font-size:11px;color:#505162;">Mar 31</div>
<div class="a" style="left:935px;top:423.5px;width:85px;height:17px;border-radius:9px;background:#333333;overflow:hidden"></div>
<div class="t" style="left:935px;top:424.0px;width:85px;text-align:center;font-size:11px;color:#fff;-webkit-text-stroke:0.2px #fff">Feb 1 - Mar 31</div>
<div class="a" style="left:1033px;top:418.5px;width:110px;height:27.5px;background:#757575"></div>
<div class="t" style="left:1033px;top:424.0px;width:111px;text-align:center;font-size:11.5px;color:#fff;-webkit-text-stroke:0.25px #fff">Not Started</div>
<div class="a" style="left:1151px;top:422.0px;width:4px;height:20px;border-radius:4px 0 0 4px;background:#5e9ffc"></div>
<div class="t" style="left:1161.5px;top:424.0px;font-size:11px;color:#5a5b6b;">Digital</div>
<div class="a" style="left:211px;top:454.0px;width:13px;height:13px;border:1px solid #c3c6d4;border-radius:2px"></div>
<div class="t" style="left:258.5px;top:452.5px;font-size:11px;color:#323338;">Retail Partner Merchandi...</div>
<svg style="left:416px;top:451.7px" width="16" height="16" viewBox="0 0 16 16" class="ic" stroke="#3b3c4e"><path d="M8.00 1.70 C9.30 1.70 9.50 5.00 10.10 5.90 C11.00 6.50 14.30 6.70 14.30 8.00 C14.30 9.30 11.00 9.50 10.10 10.10 C9.50 11.00 9.30 14.30 8.00 14.30 C6.70 14.30 6.50 11.00 5.90 10.10 C5.00 9.50 1.70 9.30 1.70 8.00 C1.70 6.70 5.00 6.50 5.90 5.90 C6.50 5.00 6.70 1.70 8.00 1.70 Z" stroke-width="1.15"/></svg>
<svg style="left:443px;top:451.7px" width="16" height="16" viewBox="0 0 16 16" class="ic" stroke="#323338"><path d="M2.2 14.2 L3 11.2 A6.6 6.6 0 1 1 5.6 13.6 Z" stroke-width="1.2"/><path d="M8.6 5 V10.6 M5.8 7.8 H11.4" stroke-width="1.2"/></svg>
<div class="a" style="left:478px;top:447.0px;width:110px;height:27.5px;background:#579bfc"></div>
<div class="t" style="left:478px;top:452.5px;width:111px;text-align:center;font-size:11.5px;color:#fff;-webkit-text-stroke:0.25px #fff">Awaiting Approval</div>
<div class="a" style="left:593px;top:452.0px;width:40px;height:17px;border-radius:3px;background:#cce4fd"></div>
<div class="t" style="left:593px;top:452.5px;width:40px;text-align:center;font-size:11.5px;color:#323338;">Retail</div>
<div class="a" style="left:638.5px;top:452.0px;width:56.5px;height:17px;border-radius:3px;background:#cce4fd"></div>
<div class="t" style="left:638.5px;top:452.5px;width:56.5px;text-align:center;font-size:11.5px;color:#323338;">Mercha...</div>
<div class="t" style="left:700px;top:452.5px;width:111px;text-align:center;font-size:11px;color:#505162;">Jan 25</div>
<div class="t" style="left:811px;top:452.5px;width:111px;text-align:center;font-size:11px;color:#505162;">Feb 28</div>
<div class="a" style="left:935px;top:452.0px;width:85px;height:17px;border-radius:9px;background:#333333;overflow:hidden"></div>
<div class="t" style="left:935px;top:452.5px;width:85px;text-align:center;font-size:11px;color:#fff;-webkit-text-stroke:0.2px #fff">Jan 25 - Feb ...</div>
<div class="a" style="left:1033px;top:447.0px;width:110px;height:27.5px;background:#579bfc"></div>
<div class="t" style="left:1033px;top:452.5px;width:111px;text-align:center;font-size:11.5px;color:#fff;-webkit-text-stroke:0.25px #fff">Budget Request...</div>
<div class="a" style="left:1151px;top:450.5px;width:4px;height:20px;border-radius:4px 0 0 4px;background:#5e9ffc"></div>
<div class="t" style="left:1161.5px;top:452.5px;font-size:11px;color:#5a5b6b;">Digital</div>
<div class="a" style="left:211px;top:482.5px;width:13px;height:13px;border:1px solid #c3c6d4;border-radius:2px"></div>
<div class="t" style="left:258.5px;top:481.0px;font-size:11px;color:#323338;">PR Campaign: Athlete A...</div>
<svg style="left:416px;top:480.2px" width="16" height="16" viewBox="0 0 16 16" class="ic" stroke="#3b3c4e"><path d="M8.00 1.70 C9.30 1.70 9.50 5.00 10.10 5.90 C11.00 6.50 14.30 6.70 14.30 8.00 C14.30 9.30 11.00 9.50 10.10 10.10 C9.50 11.00 9.30 14.30 8.00 14.30 C6.70 14.30 6.50 11.00 5.90 10.10 C5.00 9.50 1.70 9.30 1.70 8.00 C1.70 6.70 5.00 6.50 5.90 5.90 C6.50 5.00 6.70 1.70 8.00 1.70 Z" stroke-width="1.15"/></svg>
<svg style="left:443px;top:480.2px" width="16" height="16" viewBox="0 0 16 16" class="ic" stroke="#323338"><path d="M2.2 14.2 L3 11.2 A6.6 6.6 0 1 1 5.6 13.6 Z" stroke-width="1.2"/><path d="M8.6 5 V10.6 M5.8 7.8 H11.4" stroke-width="1.2"/></svg>
<div class="a" style="left:478px;top:475.5px;width:110px;height:27.5px;background:#757575"></div>
<div class="t" style="left:478px;top:481.0px;width:111px;text-align:center;font-size:11.5px;color:#fff;-webkit-text-stroke:0.25px #fff">On Hold</div>
<div class="a" style="left:593px;top:480.5px;width:25.5px;height:17px;border-radius:3px;background:#cce4fd"></div>
<div class="t" style="left:593px;top:481.0px;width:25.5px;text-align:center;font-size:11.5px;color:#323338;">PR</div>
<div class="a" style="left:624px;top:480.5px;width:71px;height:17px;border-radius:3px;background:#cce4fd"></div>
<div class="t" style="left:624px;top:481.0px;width:71px;text-align:center;font-size:11.5px;color:#323338;">Community</div>
<div class="t" style="left:700px;top:481.0px;width:111px;text-align:center;font-size:11px;color:#505162;">Mar 1</div>
<div class="t" style="left:811px;top:481.0px;width:111px;text-align:center;font-size:11px;color:#505162;">Mar 20</div>
<div class="a" style="left:935px;top:480.5px;width:85px;height:17px;border-radius:9px;background:#333333;overflow:hidden"></div>
<div class="t" style="left:935px;top:481.0px;width:85px;text-align:center;font-size:11px;color:#fff;-webkit-text-stroke:0.2px #fff">Mar 1 - 20</div>
<div class="a" style="left:1033px;top:475.5px;width:110px;height:27.5px;background:#579bfc"></div>
<div class="t" style="left:1033px;top:481.0px;width:111px;text-align:center;font-size:11.5px;color:#fff;-webkit-text-stroke:0.25px #fff">Budget Request...</div>
<div class="a" style="left:1151px;top:479.0px;width:4px;height:20px;border-radius:4px 0 0 4px;background:#5e9ffc"></div>
<div class="t" style="left:1161.5px;top:481.0px;font-size:11px;color:#5a5b6b;">Athlet</div>
<div class="a" style="left:211px;top:511.0px;width:13px;height:13px;border:1px solid #e6e7ef;border-radius:2px"></div>
<div class="t" style="left:258.5px;top:509.5px;font-size:11.5px;color:#676879;">+ Add activations</div>
<div class="a" style="left:200px;top:532.5px;width:278px;height:9px;background:linear-gradient(180deg,rgba(0,0,0,.035),rgba(0,0,0,0))"></div>
<div class="a" style="left:477px;top:532.5px;width:800px;height:29px;border:1px solid #e1e3ee;border-top:none;border-radius:0 0 0 6px;background:#fff;box-shadow:0 3px 6px -3px rgba(0,0,0,.06)"></div>
<div class="a" style="left:588px;top:532.5px;width:1px;height:28px;background:#e1e3ee"></div>
<div class="a" style="left:699px;top:532.5px;width:1px;height:28px;background:#e1e3ee"></div>
<div class="a" style="left:810px;top:532.5px;width:1px;height:28px;background:#e1e3ee"></div>
<div class="a" style="left:921px;top:532.5px;width:1px;height:28px;background:#e1e3ee"></div>
<div class="a" style="left:1032px;top:532.5px;width:1px;height:28px;background:#e1e3ee"></div>
<div class="a" style="left:1143px;top:532.5px;width:1px;height:28px;background:#e1e3ee"></div>
<div class="a" style="left:484px;top:537.0px;width:24.5px;height:19px;background:#fdab3d"></div>
<div class="a" style="left:508.5px;top:537.0px;width:24px;height:19px;background:#579bfc"></div>
<div class="a" style="left:532.5px;top:537.0px;width:25px;height:19px;background:#9cd326"></div>
<div class="a" style="left:557.5px;top:537.0px;width:24.5px;height:19px;background:#757575"></div>
<div class="a" style="left:1040px;top:537.0px;width:24px;height:19px;background:#00c875"></div>
<div class="a" style="left:1064px;top:537.0px;width:49px;height:19px;background:#579bfc"></div>
<div class="a" style="left:1113px;top:537.0px;width:24px;height:19px;background:#757575"></div>
<svg style="left:211px;top:596.5px" width="11" height="7" viewBox="0 0 11 7" class="ic" stroke="#0086c0"><path d="M1.5 1.5 L5.5 5.5 L9.5 1.5" stroke-width="1.5"/></svg>
<div class="t" style="left:231.5px;top:590.5px;font-size:16px;line-height:18px;-webkit-text-stroke:0.4px #0086c0;color:#0086c0">Planning</div>
<!-- /BOARD -->
<!-- OVERLAYS -->
<div class="a" style="left:1192px;top:454px;width:8px;height:171px;background:#fff"></div>
<div class="a" style="left:1192px;top:37px;width:8px;height:417px;background:#c5c7d4"></div>
<div class="a" style="left:168px;top:613px;width:524px;height:12px;background:#c5c7d4"></div>
<div class="a" style="left:1119px;top:579px;width:56px;height:27px;border-radius:13.5px;background:#0073ea;box-shadow:0 2px 8px rgba(0,0,0,.16)"></div>
<div class="t" style="left:1119px;top:585px;width:56px;text-align:center;font-size:13px;color:#fff">Help</div>
<!-- /OVERLAYS -->
</div>
</body></html>
